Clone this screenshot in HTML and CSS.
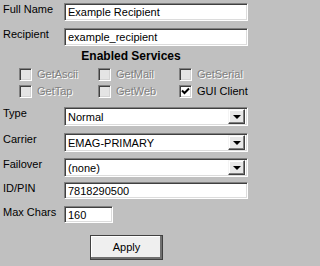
FILE: index.html
```html
<!DOCTYPE html>
<html>
<head>
<meta charset="utf-8">
<link rel="stylesheet" href="styles.css">
</head>
<body>
<div class="form">
  <div class="row r-name">
    <span class="lbl">Full Name</span>
    <div class="field wide"><span class="val">Example Recipient</span></div>
  </div>
  <div class="row r-recip">
    <span class="lbl">Recipient</span>
    <div class="field wide"><span class="val">example_recipient</span></div>
  </div>
  <div class="heading">Enabled Services</div>
  <div class="checks">
    <div class="cb disabled"><span class="box"></span><span class="cbl">GetAscii</span></div>
    <div class="cb disabled"><span class="box"></span><span class="cbl">GetMail</span></div>
    <div class="cb disabled"><span class="box"></span><span class="cbl">GetSerial</span></div>
    <div class="cb disabled"><span class="box"></span><span class="cbl">GetTap</span></div>
    <div class="cb disabled"><span class="box"></span><span class="cbl">GetWeb</span></div>
    <div class="cb"><span class="box checked"><svg width="9" height="9" viewBox="0 0 9 9"><path d="M1 3.5 L3.5 6 L8 1.5" fill="none" stroke="#000" stroke-width="2"/></svg></span><span class="cbl">GUI Client</span></div>
  </div>
  <div class="row r-type">
    <span class="lbl">Type</span>
    <div class="select"><span class="val">Normal</span><span class="dbtn"><span class="arrow"></span></span></div>
  </div>
  <div class="row r-carrier">
    <span class="lbl">Carrier</span>
    <div class="select"><span class="val">EMAG-PRIMARY</span><span class="dbtn"><span class="arrow"></span></span></div>
  </div>
  <div class="row r-fail">
    <span class="lbl">Failover</span>
    <div class="select"><span class="val">(none)</span><span class="dbtn"><span class="arrow"></span></span></div>
  </div>
  <div class="row r-pin">
    <span class="lbl">ID/PIN</span>
    <div class="field wide short"><span class="val">7818290500</span></div>
  </div>
  <div class="row r-max">
    <span class="lbl">Max Chars</span>
    <div class="field small short"><span class="val">160</span></div>
  </div>
  <div class="actions">
    <div class="apply">Apply</div>
  </div>
</div>
</body>
</html>
```

FILE: styles.css
```css
html, body {
  margin: 0;
  padding: 0;
  background: #c0c0c0;
}
body {
  width: 256px;
  height: 266px;
  overflow: hidden;
  font-family: "Liberation Sans", Arial, sans-serif;
  font-size: 11px;
  color: #000;
}
.form {
  display: flex;
  flex-direction: column;
  padding-top: 3px;
}
.row {
  display: flex;
  align-items: flex-start;
}
.lbl {
  width: 64px;
  padding-left: 3px;
  box-sizing: border-box;
  line-height: 13px;
  flex: none;
}
.field, .select {
  box-sizing: border-box;
  background: #fff;
  border: 1px solid;
  border-color: #808080 #fff #fff #808080;
  box-shadow: inset 1px 1px 0 #404040, inset -1px -1px 0 #dcdcdc;
  display: flex;
  align-items: center;
  line-height: 13px;
  white-space: nowrap;
  overflow: hidden;
}
.field {
  height: 18px;
  padding: 1px 2px 0 3px;
}
.wide { width: 184px; }
.small { width: 49px; }
.short { height: 17px; }
.r-recip { margin-top: 7px; }
.heading {
  margin-top: 3px;
  text-align: center;
  font-weight: bold;
  font-size: 12px;
  line-height: 14px;
  padding-left: 6px;
}
.checks {
  margin-top: 5px;
  padding-left: 19px;
  display: grid;
  grid-template-columns: 79px 81px 1fr;
  row-gap: 4px;
}
.cb {
  display: flex;
  align-items: center;
  height: 13px;
}
.box {
  box-sizing: border-box;
  width: 13px;
  height: 13px;
  flex: none;
  background: #e4e4e4;
  border: 1px solid;
  border-color: #808080 #fff #fff #808080;
  box-shadow: inset 1px 1px 0 #404040, inset -1px -1px 0 #d4d4d4;
  display: flex;
  align-items: center;
  justify-content: center;
}
.box.checked { background: #fff; }
.cbl {
  margin-left: 5px;
  line-height: 13px;
}
.disabled .cbl {
  color: #808080;
  text-shadow: 1px 1px 0 #fff;
}
.select {
  width: 184px;
  height: 19px;
  padding: 2px 2px 2px 3px;
  justify-content: space-between;
}
.select .val { padding-top: 1px; }
.dbtn {
  box-sizing: border-box;
  width: 17px;
  height: 15px;
  flex: none;
  background: #e8e8e8;
  border: 1px solid;
  border-color: #f4f4f4 #404040 #404040 #f4f4f4;
  box-shadow: inset -1px -1px 0 #808080, inset 1px 1px 0 #fff;
  display: flex;
  align-items: center;
  justify-content: center;
}
.arrow {
  width: 0;
  height: 0;
  border-left: 4px solid transparent;
  border-right: 4px solid transparent;
  border-top: 4px solid #000;
  margin-top: 1px;
}
.r-type { margin-top: 9px; }
.r-carrier { margin-top: 7px; }
.r-fail { margin-top: 6px; }
.r-pin { margin-top: 5px; }
.r-max { margin-top: 7px; }
.actions {
  margin-top: 12px;
  padding-left: 90px;
  display: flex;
}
.apply {
  box-sizing: border-box;
  width: 73px;
  height: 25px;
  background: #efefef;
  border: 1px solid #404040;
  box-shadow: inset -2px -2px 0 #707070, inset 1px 1px 0 #fff;
  display: flex;
  align-items: center;
  justify-content: center;
  font-size: 11px;
  padding-bottom: 1px;
}
```
